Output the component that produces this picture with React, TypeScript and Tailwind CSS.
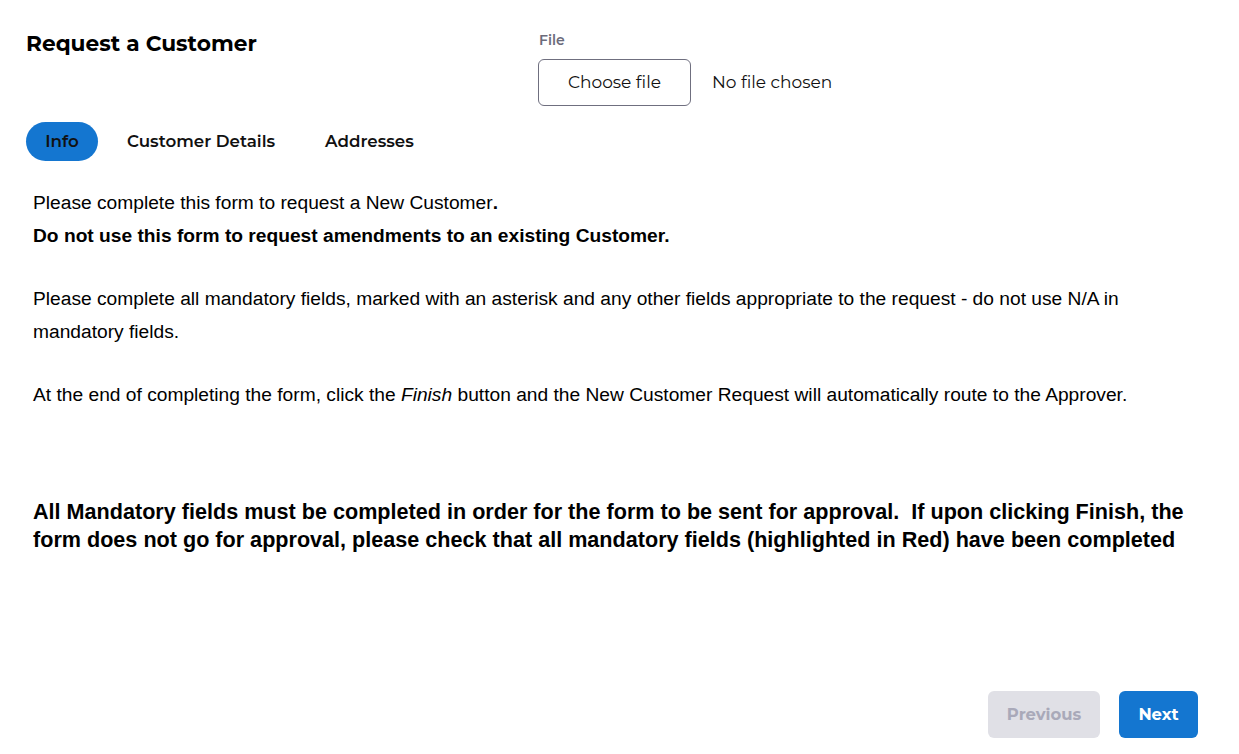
import React from "react";

const mont = "font-['Montserrat','Inter','Noto_Sans',sans-serif]";

export default function App() {
  return (
    <div className="w-[1239px] h-[754px] bg-white flex flex-col">
      <div className="flex pl-[26px] pt-[29px]">
        <div className={`w-[512px] ${mont} text-[21.7px] font-bold text-black leading-[28px]`}>
          Request a Customer
        </div>
        <div className="flex flex-col">
          <div className={`${mont} text-[14px] font-semibold text-[#6b6b7b] leading-[16px] pl-[1px] mt-[3px]`}>File</div>
          <div className="flex items-center mt-[11px]">
            <button className={`w-[153px] h-[47px] border border-[#6f6f7f] rounded-[6px] ${mont} text-[17px] text-[#111] bg-white`}>
              Choose file
            </button>
            <span className={`ml-[21px] ${mont} text-[17px] text-[#111]`}>No file chosen</span>
          </div>
        </div>
      </div>

      <div className={`flex items-center pl-[26px] mt-[16px] ${mont} text-[16.7px] font-semibold text-[#111]`}>
        <div className="h-[39px] w-[72px] rounded-full bg-[#1476d0] flex items-center justify-center">Info</div>
        <div className="ml-[29px]">Customer Details</div>
        <div className="ml-[50px]">Addresses</div>
      </div>

      <div className="pl-[33px] mt-[25px] w-[1200px] font-['Liberation_Sans',Arial,sans-serif] text-[19.2px] text-black leading-[33px]">
        <p>Please complete this form to request a New Customer<b>.</b></p>
        <p className="font-bold">Do not use this form to request amendments to an existing Customer.</p>
        <p className="mt-[30px]">
          Please complete all mandatory fields, marked with an asterisk and any other fields appropriate to the request - do not use N/A in mandatory fields.
        </p>
        <p className="mt-[30px]">
          At the end of completing the form, click the <i>Finish</i> button and the New Customer Request will automatically route to the Approver.
        </p>
        <p className="mt-[87px] font-bold text-[21.6px] leading-[28px]">
          All Mandatory fields must be completed in order for the form to be sent for approval.&nbsp; If upon clicking Finish, the form does not go for approval, please check that all mandatory fields (highlighted in Red) have been completed
        </p>
      </div>

      <div className="flex-1" />
      <div className={`flex justify-end gap-[19px] pr-[41px] pb-[16px] ${mont} text-[16.4px] font-bold`}>
        <button className="w-[112px] h-[47px] rounded-[6px] bg-[#e0e0e6] text-[#a9a9b9]">Previous</button>
        <button className="w-[79px] h-[47px] rounded-[6px] bg-[#1476d0] text-white">Next</button>
      </div>
    </div>
  );
}
